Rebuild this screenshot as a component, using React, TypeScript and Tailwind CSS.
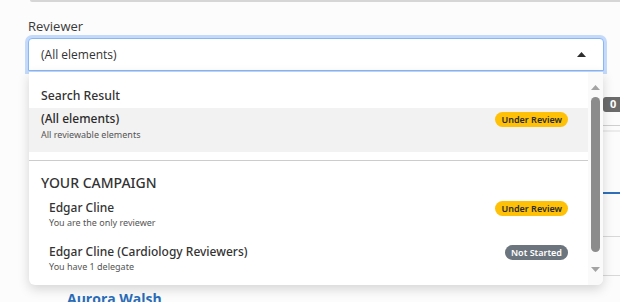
import React from 'react';

type Status = 'review' | 'notStarted';

interface Option {
  title: string;
  subtitle: string;
  status: Status;
}

const campaignOptions: Option[] = [
  { title: 'Edgar Cline', subtitle: 'You are the only reviewer', status: 'review' },
  { title: 'Edgar Cline (Cardiology Reviewers)', subtitle: 'You have 1 delegate', status: 'notStarted' },
];

const StatusBadge: React.FC<{ status: Status }> = ({ status }) =>
  status === 'review' ? (
    <span className="mt-[2px] h-[15px] shrink-0 rounded-full bg-[#ffc107] px-[6px] text-[9px] font-semibold leading-[15px] text-[#2b2b2b]">
      Under Review
    </span>
  ) : (
    <span className="mt-[2px] h-[15px] shrink-0 rounded-full bg-[#6c757d] px-[6px] text-[9px] font-semibold leading-[15px] text-white">
      Not Started
    </span>
  );

const Triangle: React.FC<{ up?: boolean; className: string }> = ({ up, className }) => (
  <svg width="9" height="5" viewBox="0 0 9 5" className={className}>
    <polygon points={up ? '0,5 4.5,0 9,5' : '0,0 9,0 4.5,5'} fill="currentColor" />
  </svg>
);

const App: React.FC = () => {
  return (
    <div className="relative h-[302px] w-[620px] overflow-hidden bg-[#fcfcfc] font-['Open_Sans',sans-serif] text-[#333]">
      {/* card edge above */}
      <div className="ml-[30px] h-[2px] rounded-bl-[3px] bg-[#d6d6d6]" />

      {/* Reviewer field */}
      <div className="pl-[28px] pr-[16px]">
        <label className="mt-[15px] block text-[13px] leading-[18px] text-[#3a3a3a]">Reviewer</label>
        <div className="mt-[3px] flex h-[33px] items-center justify-between rounded-t-[4px] border border-[#8ab6f4] bg-white pl-[12px] pr-[17px] ring-[3px] ring-[#c4dafb]">
          <span className="text-[12px] text-[#333]">(All elements)</span>
          <Triangle up className="text-[#2d2d2d]" />
        </div>
      </div>

      {/* content behind the menu */}
      <div className="flex">
        <div className="flex-1 pl-[67px] pt-[215px]">
          <span className="text-[14px] font-bold leading-[20px] text-[#2a6cb8]">Aurora Walsh</span>
        </div>
        <div className="flex w-[17px] flex-col">
          <div className="mt-[26px] flex h-[15px] items-center rounded-l-[3px] bg-[#6b6b6b] pl-[7px] text-[11px] font-bold text-white">0</div>
          <div className="mt-[13px] h-px bg-[#cfcfcf]" />
          <div className="mt-[4px] h-[2px] bg-[#ececec]" />
          <div className="mt-[60px] h-[2px] bg-[#2f6fba]" />
          <div className="mt-[42px] h-px bg-[#d8d8d8]" />
          <div className="mt-[38px] h-px bg-[#d8d8d8]" />
        </div>
      </div>

      {/* open dropdown */}
      <div className="absolute left-[29px] top-[72px] flex h-[213px] w-[574px] overflow-hidden rounded-b-[6px] bg-white shadow-[0_4px_12px_rgba(0,0,0,0.16)]">
        <div className="flex-1 pt-[15px] font-['Noto_Sans',sans-serif]">
          <div className="pl-[12px] text-[12.25px] font-medium leading-[18px] text-[#333]">Search Result</div>
          <div className="mt-[3px] flex items-start justify-between bg-[#f2f2f2] pb-[11px] pl-[12px] pr-[20px] pt-[2px]">
            <div>
              <div className="text-[12px] font-medium leading-[18px] text-[#2a2a2a]">(All elements)</div>
              <div className="text-[9px] leading-[13px] text-[#555]">All reviewable elements</div>
            </div>
            <StatusBadge status="review" />
          </div>
          <div className="mt-[8px] h-px bg-[#cccccc]" />
          <div className="mt-[12px] pl-[12px] text-[14px] font-medium leading-[20px] text-[#333]">YOUR CAMPAIGN</div>
          {campaignOptions.map(opt => (
            <div key={opt.title} className="flex items-start justify-between pb-[8px] pl-[20px] pr-[20px] pt-[6px]">
              <div>
                <div className="text-[12px] font-medium leading-[17px] text-[#333]">{opt.title}</div>
                <div className="text-[9px] leading-[13px] text-[#555]">{opt.subtitle}</div>
              </div>
              <StatusBadge status={opt.status} />
            </div>
          ))}
        </div>

        {/* scrollbar */}
        <div className="flex w-[15px] flex-col bg-[#fafafa] pl-[3px] pt-[13px]">
          <Triangle up className="text-[#a3a3a3]" />
          <div className="mt-[7px] h-[155px] w-[9px] rounded-full bg-[#8c8c8c]" />
          <Triangle className="mt-[15px] text-[#a3a3a3]" />
        </div>
      </div>
    </div>
  );
};

export default App;
